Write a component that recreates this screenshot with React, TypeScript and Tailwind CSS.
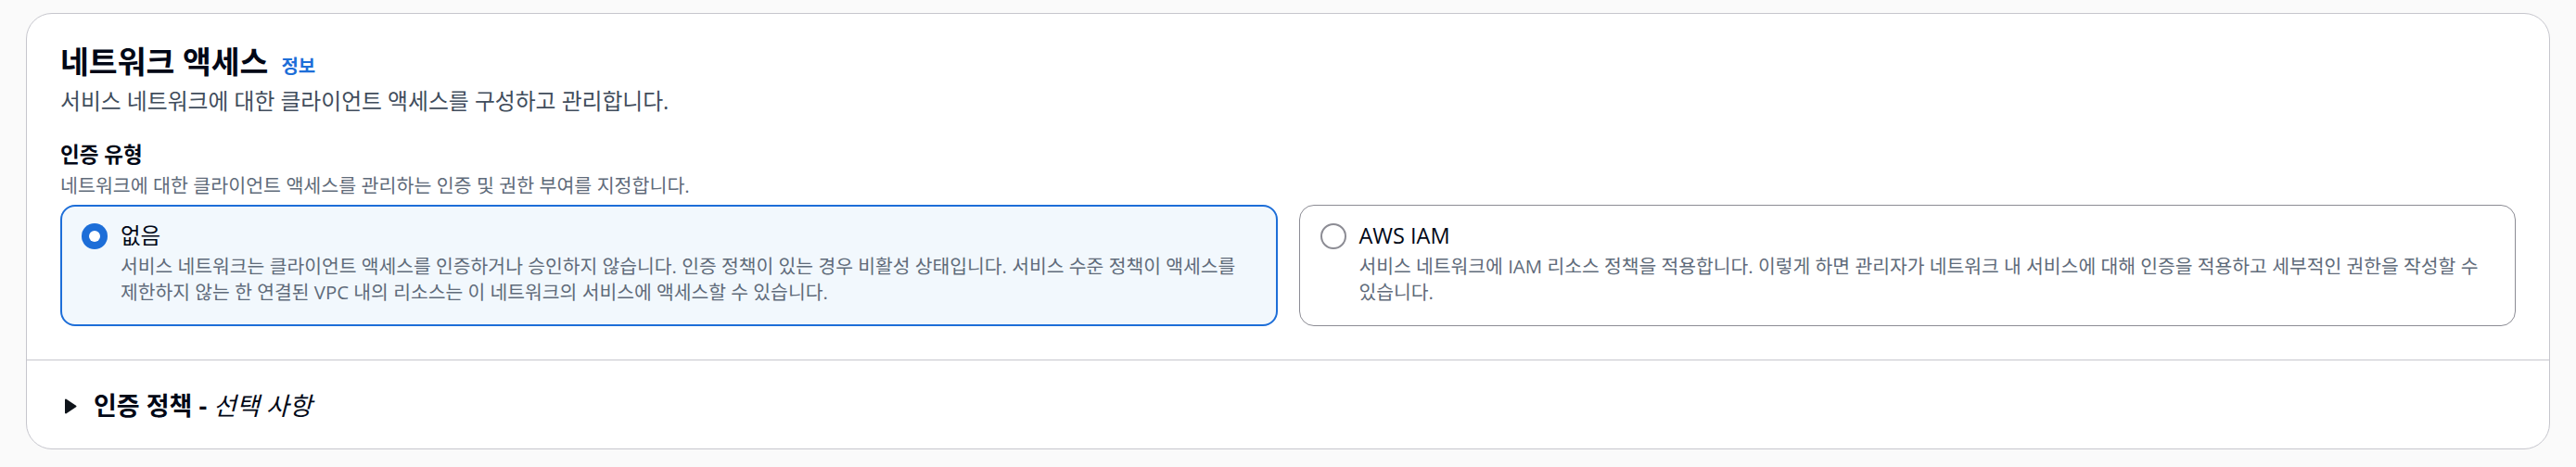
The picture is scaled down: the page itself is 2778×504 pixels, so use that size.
import React, { useState } from 'react';

const FONT = "font-['Open_Sans','Noto_Sans_CJK_KR',sans-serif]";

type Option = {
  id: string;
  label: string;
  description: string;
};

const options: Option[] = [
  {
    id: 'none',
    label: '없음',
    description:
      '서비스 네트워크는 클라이언트 액세스를 인증하거나 승인하지 않습니다. 인증 정책이 있는 경우 비활성 상태입니다. 서비스 수준 정책이 액세스를 제한하지 않는 한 연결된 VPC 내의 리소스는 이 네트워크의 서비스에 액세스할 수 있습니다.',
  },
  {
    id: 'iam',
    label: 'AWS IAM',
    description:
      '서비스 네트워크에 IAM 리소스 정책을 적용합니다. 이렇게 하면 관리자가 네트워크 내 서비스에 대해 인증을 적용하고 세부적인 권한을 작성할 수 있습니다.',
  },
];

function Radio({ checked }: { checked: boolean }) {
  if (checked) {
    return (
      <span className="flex h-[28px] w-[28px] shrink-0 items-center justify-center rounded-full bg-[#1d6ed8]">
        <span className="h-[12px] w-[12px] rounded-full bg-white" />
      </span>
    );
  }
  return <span className="h-[28px] w-[28px] shrink-0 rounded-full border-2 border-[#8c8c94] bg-white" />;
}

function Tile({ option, checked, onSelect }: { option: Option; checked: boolean; onSelect: () => void }) {
  return (
    <button
      type="button"
      onClick={onSelect}
      className={
        checked
          ? 'flex w-full items-start gap-[14px] rounded-[16px] border-2 border-[#1d6ed8] bg-[#f2f8fd] pb-[21px] pl-[21px] pr-[12px] pt-[16px] text-left'
          : 'flex w-full items-start gap-[14px] rounded-[16px] border border-[#8c8c94] bg-white pb-[22px] pl-[22px] pr-[13px] pt-[17px] text-left'
      }
    >
      <span className="mt-[1px] flex h-[30px] shrink-0 items-center">
        <Radio checked={checked} />
      </span>
      <span className="flex min-w-0 flex-1 flex-col">
        <span className="text-[23.5px] leading-[30px] text-[#000716]">{option.label}</span>
        <span className="mt-[4px] break-keep text-[20.4px] leading-[28px] text-[#5f6b7a]">{option.description}</span>
      </span>
    </button>
  );
}

export default function App() {
  const [selected, setSelected] = useState('none');

  return (
    <div className={`min-h-screen bg-[#fafafa] px-[28px] pt-[14px] ${FONT}`}>
      <div className="rounded-[28px] border border-[#c6c6cd] bg-white">
        <div className="px-[36px] pb-[36px] pt-[31px]">
          <div className="flex items-baseline">
            <h2 className="text-[33.5px] font-bold leading-[40px] text-[#000716]">네트워크 액세스</h2>
            <a href="#" className="ml-[14px] text-[20px] font-bold text-[#1d6ed8]">
              정보
            </a>
          </div>
          <p className="mt-[7px] text-[23.8px] leading-[30px] text-[#414d5c]">
            서비스 네트워크에 대한 클라이언트 액세스를 구성하고 관리합니다.
          </p>

          <div className="mt-[28px] text-[22.5px] font-bold leading-[30px] text-[#000716]">인증 유형</div>
          <p className="mt-[4px] text-[20.6px] leading-[28px] text-[#5f6b7a]">
            네트워크에 대한 클라이언트 액세스를 관리하는 인증 및 권한 부여를 지정합니다.
          </p>

          <div className="mt-[7px] grid grid-cols-2 gap-[23px]">
            {options.map((o) => (
              <Tile key={o.id} option={o} checked={selected === o.id} onSelect={() => setSelected(o.id)} />
            ))}
          </div>
        </div>

        <div className="border-t border-[#c6c6cd] pb-[29px] pl-[40px] pt-[32px]">
          <button type="button" className="flex items-center gap-[18px] text-[27px] leading-[34px] text-[#000716]">
            <svg width="14" height="17" viewBox="0 0 14 17" aria-hidden="true">
              <path d="M2 1.5 L12.5 8.5 L2 15.5 Z" fill="#0f141a" stroke="#0f141a" strokeWidth="2" strokeLinejoin="round" />
            </svg>
            <span>
              <span className="font-bold">인증 정책 - </span>
              <span className="italic">선택 사항</span>
            </span>
          </button>
        </div>
      </div>
    </div>
  );
}
